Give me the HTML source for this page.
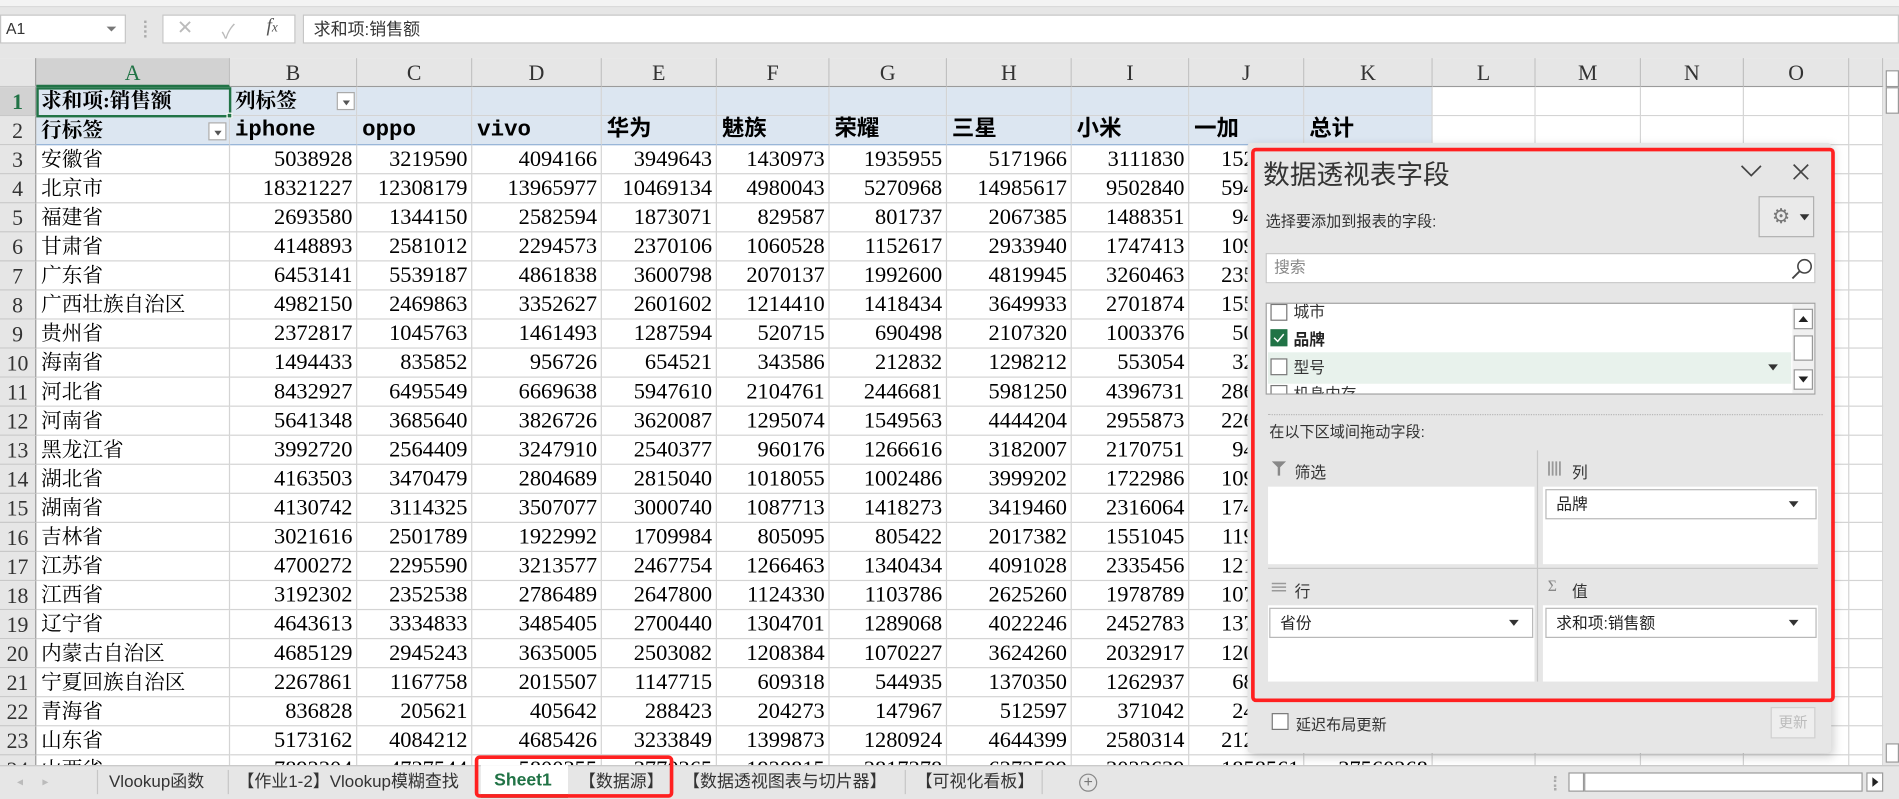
<!DOCTYPE html>
<html><head><meta charset="utf-8">
<style>
*{margin:0;padding:0;box-sizing:border-box}
html,body{width:1899px;height:799px;overflow:hidden;background:#fff}
#w{position:absolute;left:0;top:0;width:1568px;height:660px;transform:scale(1.21110,1.21060);transform-origin:0 0;background:#fff;font-family:"Liberation Serif","Noto Serif CJK SC",serif;}
.a{position:absolute}
.ui{font-family:"Liberation Sans","Noto Sans CJK SC",sans-serif}
.row{position:absolute;left:0;height:24px;display:grid;grid-template-columns:30px 160px 105px 95px 107px 95px 93px 97px 103px 97px 95px 106px 85px 87px 85px 87px 28px;width:1555px}
.row>span{border-right:1px solid #d4d4d4;border-bottom:1px solid #d4d4d4;height:24px;line-height:24px;font-size:18.5px;text-align:right;padding-right:3px;white-space:nowrap;overflow:hidden;color:#000}
.row>span:first-child{background:#e6e6e6;text-align:center;padding:0;font-size:18px;color:#333;border-right:1px solid #9b9b9b;border-bottom:1px solid #c8c8c8}
.row>span:nth-child(2){text-align:left;padding-left:4px;font-size:17px;overflow:visible}
.hd>span{background:#e6e6e6;text-align:center;padding:0;border-right:1px solid #c0c0c0;border-bottom:1px solid #9b9b9b;color:#333;font-size:18px}
.hd>span:nth-child(2){text-align:center;padding:0;background:#d2d2d2;border-bottom:2px solid #217346;color:#217346;font-size:18px}
.pv>span{background:#dce6f1}
.pv>span:nth-child(n+13){background:#fff}
.mono{font-family:"Liberation Mono","Noto Sans CJK SC",monospace;font-weight:bold;font-size:17px}
.dd{position:absolute;width:15px;height:15px;border:1px solid #aaa;background:#fff}
.dd:after{content:"";position:absolute;left:4px;top:6px;border-left:3px solid transparent;border-right:3px solid transparent;border-top:4px solid #555}
.tri{position:absolute;border-left:5px solid transparent;border-right:5px solid transparent;border-top:6px solid #333}
.cb{position:absolute;width:14px;height:14px;border:1px solid #777;background:#fff}
.tab{position:absolute;top:632px;height:26px;line-height:26px;font-size:14px;color:#333;font-family:"Liberation Sans","Noto Sans CJK SC",sans-serif}
.sep{position:absolute;top:636px;width:1px;height:20px;background:#c6c6c6}
</style></head><body><div id="w">
<div class="a" style="left:0;top:0;width:1568px;height:48px;background:#e6e6e6"></div>
<div class="a" style="left:0;top:0;width:1568px;height:6px;background:#f3f3f3;border-bottom:1px solid #d8d8d8"></div>
<div class="a ui" style="left:0;top:12px;width:104px;height:24px;background:#fff;border:1px solid #c6c6c6;font-size:13px;line-height:22px;padding-left:4px;color:#333">A1</div>
<div class="tri" style="left:88px;top:22px;border-top-color:#777;border-width:4px 4px 0 4px"></div>
<div class="a" style="left:119px;top:17px;width:2px;height:14px;border-left:2px dotted #aaa"></div>
<div class="a" style="left:134px;top:12px;width:110px;height:24px;background:#fff;border:1px solid #c6c6c6"></div>
<div class="a ui" style="left:146px;top:13px;font-size:16px;color:#bbb">✕</div>
<div class="a ui" style="left:183px;top:13px;font-size:16px;color:#bbb">✓</div>
<div class="a" style="left:220px;top:13px;font-size:16px;font-style:italic;color:#555">f<span style="font-size:11px">x</span></div>
<div class="a ui" style="left:250px;top:12px;width:1318px;height:24px;background:#fff;border:1px solid #c6c6c6;font-size:14px;line-height:22px;padding-left:8px;color:#333">求和项:销售额</div>
<div class="row hd" style="top:48px"><span style="background:#e6e6e6"><i style="position:absolute;left:8px;top:56px;border-left:17px solid transparent;border-bottom:14px solid #b4b4b4"></i></span><span>A</span><span>B</span><span>C</span><span>D</span><span>E</span><span>F</span><span>G</span><span>H</span><span>I</span><span>J</span><span>K</span><span>L</span><span>M</span><span>N</span><span>O</span><span></span></div>
<div class="row pv" style="top:72px;font-weight:bold"><span style="background:#d2d2d2;color:#217346">1</span><span style="font-weight:bold">求和项:销售额</span><span style="text-align:left;padding-left:4px;font-size:17px;font-weight:bold">列标签</span><span></span><span></span><span></span><span></span><span></span><span></span><span></span><span></span><span></span><span></span><span></span><span></span><span></span><span></span></div>
<div class="row pv" style="top:96px"><span>2</span><span style="font-weight:bold;border-bottom:1px solid #95b3d7">行标签</span><span class="mono" style="text-align:left;padding-left:4px;border-bottom:1px solid #95b3d7">iphone</span><span class="mono" style="text-align:left;padding-left:4px;border-bottom:1px solid #95b3d7">oppo</span><span class="mono" style="text-align:left;padding-left:4px;border-bottom:1px solid #95b3d7">vivo</span><span class="mono" style="text-align:left;padding-left:4px;border-bottom:1px solid #95b3d7">华为</span><span class="mono" style="text-align:left;padding-left:4px;border-bottom:1px solid #95b3d7">魅族</span><span class="mono" style="text-align:left;padding-left:4px;border-bottom:1px solid #95b3d7">荣耀</span><span class="mono" style="text-align:left;padding-left:4px;border-bottom:1px solid #95b3d7">三星</span><span class="mono" style="text-align:left;padding-left:4px;border-bottom:1px solid #95b3d7">小米</span><span class="mono" style="text-align:left;padding-left:4px;border-bottom:1px solid #95b3d7">一加</span><span class="mono" style="text-align:left;padding-left:4px;border-bottom:1px solid #95b3d7">总计</span><span></span><span></span><span></span><span></span><span></span></div>
<div class="dd" style="left:278px;top:76px"></div>
<div class="dd" style="left:172px;top:101px"></div>
<div class="a" style="left:30px;top:72px;width:161px;height:25px;border:2px solid #217346"></div>
<div class="a" style="left:187px;top:93px;width:5px;height:5px;background:#217346;border:1px solid #fff"></div>

<div class="row" style="top:120px"><span>3</span><span>安徽省</span><span>5038928</span><span>3219590</span><span>4094166</span><span>3949643</span><span>1430973</span><span>1935955</span><span>5171966</span><span>3111830</span><span>1520000</span><span></span><span></span><span></span><span></span><span></span><span></span></div>
<div class="row" style="top:144px"><span>4</span><span>北京市</span><span>18321227</span><span>12308179</span><span>13965977</span><span>10469134</span><span>4980043</span><span>5270968</span><span>14985617</span><span>9502840</span><span>5940000</span><span></span><span></span><span></span><span></span><span></span><span></span></div>
<div class="row" style="top:168px"><span>5</span><span>福建省</span><span>2693580</span><span>1344150</span><span>2582594</span><span>1873071</span><span>829587</span><span>801737</span><span>2067385</span><span>1488351</span><span>940000</span><span></span><span></span><span></span><span></span><span></span><span></span></div>
<div class="row" style="top:192px"><span>6</span><span>甘肃省</span><span>4148893</span><span>2581012</span><span>2294573</span><span>2370106</span><span>1060528</span><span>1152617</span><span>2933940</span><span>1747413</span><span>1090000</span><span></span><span></span><span></span><span></span><span></span><span></span></div>
<div class="row" style="top:216px"><span>7</span><span>广东省</span><span>6453141</span><span>5539187</span><span>4861838</span><span>3600798</span><span>2070137</span><span>1992600</span><span>4819945</span><span>3260463</span><span>2350000</span><span></span><span></span><span></span><span></span><span></span><span></span></div>
<div class="row" style="top:240px"><span>8</span><span>广西壮族自治区</span><span>4982150</span><span>2469863</span><span>3352627</span><span>2601602</span><span>1214410</span><span>1418434</span><span>3649933</span><span>2701874</span><span>1550000</span><span></span><span></span><span></span><span></span><span></span><span></span></div>
<div class="row" style="top:264px"><span>9</span><span>贵州省</span><span>2372817</span><span>1045763</span><span>1461493</span><span>1287594</span><span>520715</span><span>690498</span><span>2107320</span><span>1003376</span><span>500000</span><span></span><span></span><span></span><span></span><span></span><span></span></div>
<div class="row" style="top:288px"><span>10</span><span>海南省</span><span>1494433</span><span>835852</span><span>956726</span><span>654521</span><span>343586</span><span>212832</span><span>1298212</span><span>553054</span><span>320000</span><span></span><span></span><span></span><span></span><span></span><span></span></div>
<div class="row" style="top:312px"><span>11</span><span>河北省</span><span>8432927</span><span>6495549</span><span>6669638</span><span>5947610</span><span>2104761</span><span>2446681</span><span>5981250</span><span>4396731</span><span>2860000</span><span></span><span></span><span></span><span></span><span></span><span></span></div>
<div class="row" style="top:336px"><span>12</span><span>河南省</span><span>5641348</span><span>3685640</span><span>3826726</span><span>3620087</span><span>1295074</span><span>1549563</span><span>4444204</span><span>2955873</span><span>2260000</span><span></span><span></span><span></span><span></span><span></span><span></span></div>
<div class="row" style="top:360px"><span>13</span><span>黑龙江省</span><span>3992720</span><span>2564409</span><span>3247910</span><span>2540377</span><span>960176</span><span>1266616</span><span>3182007</span><span>2170751</span><span>940000</span><span></span><span></span><span></span><span></span><span></span><span></span></div>
<div class="row" style="top:384px"><span>14</span><span>湖北省</span><span>4163503</span><span>3470479</span><span>2804689</span><span>2815040</span><span>1018055</span><span>1002486</span><span>3999202</span><span>1722986</span><span>1090000</span><span></span><span></span><span></span><span></span><span></span><span></span></div>
<div class="row" style="top:408px"><span>15</span><span>湖南省</span><span>4130742</span><span>3114325</span><span>3507077</span><span>3000740</span><span>1087713</span><span>1418273</span><span>3419460</span><span>2316064</span><span>1740000</span><span></span><span></span><span></span><span></span><span></span><span></span></div>
<div class="row" style="top:432px"><span>16</span><span>吉林省</span><span>3021616</span><span>2501789</span><span>1922992</span><span>1709984</span><span>805095</span><span>805422</span><span>2017382</span><span>1551045</span><span>1190000</span><span></span><span></span><span></span><span></span><span></span><span></span></div>
<div class="row" style="top:456px"><span>17</span><span>江苏省</span><span>4700272</span><span>2295590</span><span>3213577</span><span>2467754</span><span>1266463</span><span>1340434</span><span>4091028</span><span>2335456</span><span>1210000</span><span></span><span></span><span></span><span></span><span></span><span></span></div>
<div class="row" style="top:480px"><span>18</span><span>江西省</span><span>3192302</span><span>2352538</span><span>2786489</span><span>2647800</span><span>1124330</span><span>1103786</span><span>2625260</span><span>1978789</span><span>1070000</span><span></span><span></span><span></span><span></span><span></span><span></span></div>
<div class="row" style="top:504px"><span>19</span><span>辽宁省</span><span>4643613</span><span>3334833</span><span>3485405</span><span>2700440</span><span>1304701</span><span>1289068</span><span>4022246</span><span>2452783</span><span>1370000</span><span></span><span></span><span></span><span></span><span></span><span></span></div>
<div class="row" style="top:528px"><span>20</span><span>内蒙古自治区</span><span>4685129</span><span>2945243</span><span>3635005</span><span>2503082</span><span>1208384</span><span>1070227</span><span>3624260</span><span>2032917</span><span>1200000</span><span></span><span></span><span></span><span></span><span></span><span></span></div>
<div class="row" style="top:552px"><span>21</span><span>宁夏回族自治区</span><span>2267861</span><span>1167758</span><span>2015507</span><span>1147715</span><span>609318</span><span>544935</span><span>1370350</span><span>1262937</span><span>680000</span><span></span><span></span><span></span><span></span><span></span><span></span></div>
<div class="row" style="top:576px"><span>22</span><span>青海省</span><span>836828</span><span>205621</span><span>405642</span><span>288423</span><span>204273</span><span>147967</span><span>512597</span><span>371042</span><span>240000</span><span></span><span></span><span></span><span></span><span></span><span></span></div>
<div class="row" style="top:600px"><span>23</span><span>山东省</span><span>5173162</span><span>4084212</span><span>4685426</span><span>3233849</span><span>1399873</span><span>1280924</span><span>4644399</span><span>2580314</span><span>2120000</span><span></span><span></span><span></span><span></span><span></span><span></span></div>
<div class="row" style="top:624px"><span>24</span><span>山西省</span><span>7892304</span><span>4737544</span><span>5800355</span><span>3770365</span><span>1928815</span><span>2817378</span><span>6273599</span><span>3023639</span><span>1858561</span><span>37560268</span><span></span><span></span><span></span><span></span><span></span></div>

<div class="a" style="left:1555px;top:48px;width:13px;height:584px;background:#e6e6e6"></div>
<div class="a" style="left:1557px;top:58px;width:11px;height:14px;border:1px solid #999;background:#fff"></div>
<div class="a" style="left:1557px;top:72px;width:11px;height:22px;border:1px solid #999;background:#fff"></div>
<div class="a" style="left:1557px;top:614px;width:11px;height:16px;border:1px solid #999;background:#fff"></div>

<div class="a ui" style="left:1030px;top:118px;width:482px;height:504px;background:#e6e6e6;border-radius:3px;box-shadow:2px 3px 8px rgba(0,0,0,.18);color:#333"></div>
<div class="a ui" style="left:1033px;top:122px;width:482px;height:458px;border:3px solid #ff2020;border-radius:4px"></div>
<div class="a ui" style="left:1043px;top:127px;font-size:22px;color:#333">数据透视表字段</div>
<svg class="a" style="left:1436px;top:134px" width="20" height="14"><path d="M2 3 L10 11 L18 3" fill="none" stroke="#444" stroke-width="1.4"/></svg>
<svg class="a" style="left:1480px;top:135px" width="14" height="14"><path d="M1 1 L13 13 M13 1 L1 13" fill="none" stroke="#444" stroke-width="1.4"/></svg>
<div class="a ui" style="left:1045px;top:172px;font-size:12.5px;color:#333">选择要添加到报表的字段:</div>
<div class="a" style="left:1452px;top:162px;width:46px;height:34px;border:1px solid #b0b0b0;background:#eaeaea"></div>
<div class="a" style="left:1463px;top:171px;font-size:17px;color:#777;line-height:16px">⚙</div>
<div class="tri" style="left:1486px;top:177px;border-width:5px 4px 0 4px"></div>
<div class="a ui" style="left:1045px;top:209px;width:454px;height:25px;background:#fff;border:1px solid #c8c8c8;font-size:13px;line-height:22px;padding-left:6px;color:#888">搜索</div>
<svg class="a" style="left:1478px;top:212px" width="20" height="20"><circle cx="12" cy="8" r="5.5" fill="none" stroke="#444" stroke-width="1.3"/><path d="M8 12 L2 18" stroke="#444" stroke-width="1.5"/></svg>
<div class="a" style="left:1045px;top:250px;width:454px;height:76px;background:#fff;border:1px solid #a0a0a0;overflow:hidden">
  <div class="a" style="left:1px;top:40px;width:432px;height:26px;background:#e8f2ec"></div>
  <div class="cb" style="left:3px;top:0px"></div><div class="a ui" style="left:22px;top:-4px;font-size:13px;color:#333">城市</div>
  <div class="cb" style="left:3px;top:21px;background:#217346;border-color:#217346"><svg width="12" height="12" style="position:absolute;left:0;top:0"><path d="M2 6 L5 9 L10 3" fill="none" stroke="#fff" stroke-width="1.2"/></svg></div><div class="a ui" style="left:22px;top:19px;font-size:13px;font-weight:bold;color:#222">品牌</div>
  <div class="cb" style="left:3px;top:45px"></div><div class="a ui" style="left:22px;top:42px;font-size:13px;color:#333">型号</div>
  <div class="tri" style="left:414px;top:50px;border-width:5px 4px 0 4px"></div>
  <div class="cb" style="left:3px;top:67px"></div><div class="a ui" style="left:22px;top:64px;font-size:13px;color:#333">机身内存</div>
  <div class="a" style="left:434px;top:0;width:19px;height:76px;background:#f0f0f0"></div>
  <div class="a" style="left:435px;top:4px;width:16px;height:17px;border:1px solid #999;background:#fff"><div class="a" style="left:3px;top:5px;border-left:4px solid transparent;border-right:4px solid transparent;border-bottom:5px solid #222"></div></div>
  <div class="a" style="left:435px;top:26px;width:16px;height:21px;border:1px solid #999;background:#fff"></div>
  <div class="a" style="left:435px;top:54px;width:16px;height:17px;border:1px solid #999;background:#fff"><div class="a" style="left:3px;top:5px;border-left:4px solid transparent;border-right:4px solid transparent;border-top:5px solid #222"></div></div>
</div>
<div class="a" style="left:1047px;top:342px;width:458px;height:0;border-top:1px dotted #b8b8b8"></div>
<div class="a ui" style="left:1048px;top:346px;font-size:12.5px;color:#333">在以下区域间拖动字段:</div>
<div class="a" style="left:1269px;top:372px;width:1px;height:191px;background:#c8c8c8"></div>
<div class="a" style="left:1047px;top:469px;width:454px;height:1px;background:#c8c8c8"></div>
<svg class="a" style="left:1050px;top:381px" width="12" height="12"><path d="M0 0 H12 L7 5 V12 H5 V5 Z" fill="#888"/></svg>
<div class="a ui" style="left:1069px;top:380px;font-size:13px;color:#333">筛选</div>
<svg class="a" style="left:1278px;top:381px" width="12" height="12"><path d="M1 0V12M4 0V12M7 0V12M10 0V12" stroke="#999" stroke-width="1.5"/></svg>
<div class="a ui" style="left:1298px;top:380px;font-size:13px;color:#333">列</div>
<div class="a" style="left:1047px;top:402px;width:220px;height:64px;background:#fff"></div>
<div class="a" style="left:1274px;top:402px;width:227px;height:64px;background:#fff"></div>
<div class="a ui" style="left:1276px;top:404px;width:224px;height:25px;border:1px solid #b8b8b8;background:#fff;font-size:13px;line-height:23px;padding-left:8px;color:#222">品牌</div>
<div class="tri" style="left:1477px;top:414px;border-width:5px 4px 0 4px"></div>
<svg class="a" style="left:1050px;top:481px" width="12" height="10"><path d="M0 1H12M0 4H12M0 7H12" stroke="#999" stroke-width="1.3"/></svg>
<div class="a ui" style="left:1069px;top:478px;font-size:13px;color:#333">行</div>
<div class="a" style="left:1278px;top:476px;font-size:13px;color:#888">Σ</div>
<div class="a ui" style="left:1298px;top:478px;font-size:13px;color:#333">值</div>
<div class="a" style="left:1047px;top:500px;width:220px;height:63px;background:#fff"></div>
<div class="a" style="left:1274px;top:500px;width:227px;height:63px;background:#fff"></div>
<div class="a ui" style="left:1048px;top:502px;width:218px;height:25px;border:1px solid #b8b8b8;background:#fff;font-size:13px;line-height:23px;padding-left:8px;color:#222">省份</div>
<div class="tri" style="left:1246px;top:512px;border-width:5px 4px 0 4px"></div>
<div class="a ui" style="left:1276px;top:502px;width:224px;height:25px;border:1px solid #b8b8b8;background:#fff;font-size:13px;line-height:23px;padding-left:8px;color:#222">求和项:销售额</div>
<div class="tri" style="left:1477px;top:512px;border-width:5px 4px 0 4px"></div>
<div class="cb" style="left:1050px;top:589px;width:14px;height:14px"></div>
<div class="a ui" style="left:1070px;top:588px;font-size:12.5px;color:#333">延迟布局更新</div>
<div class="a ui" style="left:1462px;top:584px;width:37px;height:26px;border:1px solid #d0d0d0;background:#eee;font-size:12px;line-height:24px;text-align:center;color:#bbb">更新</div>

<div class="a" style="left:0;top:632px;width:1568px;height:28px;background:#e6e6e6;border-top:1px solid #c6c6c6"></div>
<div class="a" style="left:14px;top:641px;font-size:10px;color:#bbb">◂</div>
<div class="a" style="left:35px;top:641px;font-size:10px;color:#bbb">▸</div>
<div class="sep" style="left:80px"></div>
<div class="tab" style="left:90px">Vlookup函数</div>
<div class="sep" style="left:188px"></div>
<div class="tab" style="left:196px">【作业1-2】Vlookup模糊查找</div>
<div class="a" style="left:397px;top:632px;width:72px;height:27px;background:#fff;border-bottom:3px solid #217346"></div>
<div class="tab" style="left:408px;font-weight:bold;color:#217346;font-size:14.5px">Sheet1</div>
<div class="tab" style="left:478px">【数据源】</div>
<div class="sep" style="left:554px"></div>
<div class="tab" style="left:564px">【数据透视图表与切片器】</div>
<div class="sep" style="left:747px"></div>
<div class="tab" style="left:756px">【可视化看板】</div>
<div class="sep" style="left:860px"></div>
<div class="a" style="left:891px;top:639px;width:15px;height:15px;border:1px solid #888;border-radius:50%;font-size:13px;line-height:12px;text-align:center;color:#777;font-family:'Liberation Sans',sans-serif">+</div>
<div class="a" style="left:392px;top:624px;width:164px;height:35px;border:3px solid #ff2020;border-radius:4px"></div>
<div class="a" style="left:1283px;top:641px;width:2px;height:12px;border-left:2px dotted #aaa"></div>
<div class="a" style="left:1295px;top:638px;width:13px;height:16px;border:1px solid #999;background:#fff"></div>
<div class="a" style="left:1308px;top:638px;width:230px;height:16px;border:1px solid #999;background:#fff"></div>
<div class="a" style="left:1541px;top:638px;width:14px;height:16px;border:1px solid #999;background:#fff"><div class="a" style="left:4px;top:3px;border-top:4px solid transparent;border-bottom:4px solid transparent;border-left:5px solid #222"></div></div>
</div></body></html>
